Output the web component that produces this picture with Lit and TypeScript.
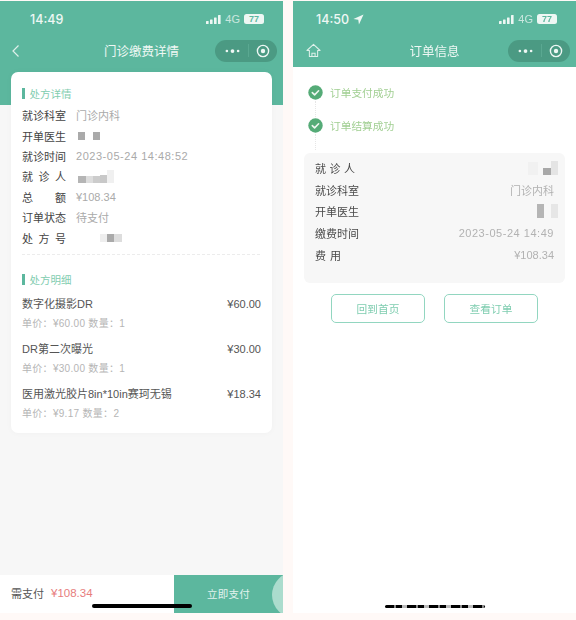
import { LitElement, html, css, svg } from "lit";
import { customElement } from "lit/decorators.js";

const statusRight = html`<div class="sr">
  <svg width="15" height="9" viewBox="0 0 15 9"><rect x="0" y="6" width="2.6" height="3" rx=".5"/><rect x="4" y="4.4" width="2.6" height="4.6" rx=".5"/><rect x="8" y="2.4" width="2.6" height="6.6" rx=".5"/><rect x="12" y="0" width="2.6" height="9" rx=".5"/></svg>
  <span class="net">4G</span>
  <span class="batt">77</span>
</div>`;

const capsule = html`<div class="capsule">
  <svg class="dots" width="15" height="6" viewBox="0 0 16 6"><circle cx="2" cy="3" r="1.4"/><circle cx="8" cy="3" r="2"/><circle cx="14" cy="3" r="1.4"/></svg>
  <i class="sep"></i>
  <svg class="rec" width="14" height="14" viewBox="0 0 14 14"><circle cx="7" cy="7" r="5.6" fill="none" stroke="#eef7f4" stroke-width="1.4"/><circle cx="7" cy="7" r="2.2" fill="#eef7f4"/></svg>
</div>`;

const check = svg`<svg width="15" height="15" viewBox="0 0 15 15"><circle cx="7.5" cy="7.5" r="7.2" fill="#55ab77"/><path d="M4.3 7.6l2.3 2.3 4-4.1" fill="none" stroke="#eef7f0" stroke-width="1.6" stroke-linecap="round" stroke-linejoin="round"/></svg>`;

type Cell = [number, string, number?];
const mosaic = (cells: Cell[], cls = "") => html`<span class="mosaic ${cls}">${cells.map(([w, c, h]) => html`<i style="width:${w}px;height:${h ?? 8}px;background:${c}"></i>`)}</span>`;

@customElement("app-root")
export class AppRoot extends LitElement {
  static styles = css`
    :host { display: block; width: 576px; height: 620px; background: #fff9f7; overflow: hidden; font-family: "Liberation Sans", "Noto Sans CJK SC", sans-serif; }
    .wrap { display: grid; grid-template-columns: 283px 283px; column-gap: 10px; padding-top: 1px; filter: blur(0.45px); }
    .phone { position: relative; height: 612px; display: flex; flex-direction: column; overflow: hidden; }
    .left { background: #f7f7f7; }
    .right { background: #fff; }
    .head { background: #5cb79e; flex: none; color: #eef7f4; }
    .status { height: 30px; padding: 6px 19px 0 30px; box-sizing: border-box; display: flex; align-items: center; justify-content: space-between; }
    .right .status { padding-left: 23px; }
    .time { font-family: Inter, "Liberation Sans", sans-serif; font-size: 12.5px; font-weight: 500; display: flex; align-items: center; gap: 4px; }
    .sr { display: flex; align-items: center; gap: 4px; }
    .sr svg { fill: #eef7f4; }
    .net { font-size: 11px; opacity: .75; }
    .batt { width: 20px; height: 10px; border-radius: 2.5px; background: #eef7f4; color: #5cb79e; font-size: 9px; font-weight: 700; line-height: 10px; text-align: center; }
    .nav { height: 36px; padding: 3px 6px 0 10px; box-sizing: border-box; display: grid; grid-template-columns: 1fr auto; align-items: center; position: relative; }
    .title { position: absolute; left: 0; right: 0; top: 6px; text-align: center; font-size: 12.5px; line-height: 30px; }
    .capsule { grid-column: 2; width: 62px; height: 22px; border-radius: 11px; background: #4b9a83; display: flex; align-items: center; justify-content: space-between; padding: 0 7px 0 10px; box-sizing: border-box; }
    .dots { fill: #eef7f4; }
    .sep { width: 1px; height: 13px; background: #5aa891; }
    .back { margin-left: 1px; }
    .home { margin-left: 3px; }
    .body { flex: 1; padding: 5px 11px 0; background: linear-gradient(#5cb79e 38px, transparent 38px); }
    .card { background: #fff; border-radius: 7px; height: 361px; box-sizing: border-box; padding: 13px 11px 0; box-shadow: 0 0 6px rgba(0,0,0,.03); }
    .sec { display: flex; align-items: center; gap: 5px; font-size: 10.5px; color: #82cdb0; height: 16px; }
    .sec::before { content: ""; width: 2.5px; height: 11px; background: #5cb79e; }
    .kv { display: flex; flex-direction: column; margin-top: 4px; }
    .kvrow { display: flex; align-items: center; height: 20.4px; font-size: 11px; }
    .lab { width: 44px; color: #444; text-align: justify; text-align-last: justify; flex: none; }
    .val { margin-left: 10px; color: #aaa; display: flex; align-items: center; }
    .val.date, .pval.date { letter-spacing: .53px; }
    .val.m1 { margin-left: 12px; }
    .val.m2 { margin-left: 34px; }
    .dash { border-top: 1px dashed #ececec; margin: 6px 1px 0 0; }
    .sec2 { margin-top: 17px; }
    .items { margin-top: 8px; display: flex; flex-direction: column; gap: 10px; }
    .item { height: 35px; display: flex; flex-direction: column; justify-content: space-between; }
    .itop { display: flex; justify-content: space-between; font-size: 11px; color: #555; line-height: 17px; }
    .isub { font-size: 10px; letter-spacing: .3px; color: #b5b5b5; line-height: 15px; }
    .pay { flex: none; height: 38px; display: flex; background: #fff; margin: 0; }
    .pay .sum { width: 174px; display: flex; align-items: center; padding-left: 11px; box-sizing: border-box; font-size: 11px; color: #555; gap: 7px; padding-bottom: 2px; }
    .pay .sum b { font-weight: 400; color: #e77d7d; font-size: 11.5px; }
    .pay .go { flex: 1; background: #5cb79e; color: #e3f3ee; font-size: 10.5px; display: flex; align-items: center; justify-content: center; letter-spacing: .3px; padding-bottom: 2px; }
    .blob { position: absolute; left: 272px; top: 571px; width: 46px; height: 46px; border-radius: 50%; background: #abdccd; }
    .bar { position: absolute; height: 3.5px; width: 100px; border-radius: 2px; background: #000; }
    .left .bar { left: 92px; top: 603px; }
    .right .bar { left: 92px; top: 604px; height: 2.5px; background: repeating-linear-gradient(90deg, #000 0 9px, #888 9px 11px, #000 11px 17px, #bbb 17px 22px); }
    .steps { flex: none; padding: 17px 0 0 15px; display: flex; flex-direction: column; }
    .step { display: flex; align-items: center; gap: 7px; height: 17px; font-size: 10.7px; color: #a1cf92; }
    .step svg { flex: none; }
    .dotline { height: 16px; margin-left: 7px; border-left: 1px dotted #e6e6e6; }
    .panel { flex: none; margin: 3px 11px 0; height: 130px; background: #f7f7f7; border-radius: 6px; box-sizing: border-box; padding: 4px 11px 0; display: flex; flex-direction: column; }
    .prow { height: 21.7px; display: flex; justify-content: space-between; align-items: center; font-size: 11px; color: #555; }
    .plab { color: #4a4a4a; }
    .plab.j { width: 40px; text-align-last: justify; }
    .plab.k { width: 26px; text-align-last: justify; }
    .pval { color: #b2b2b2; display: flex; align-items: center; }
    .btns { flex: none; margin-top: 11px; padding-left: 38px; display: flex; gap: 19px; }
    .btn { width: 94px; height: 29px; box-sizing: border-box; border: 1px solid #92d6c0; border-radius: 5px; color: #7fcdb0; font-size: 10.7px; display: flex; align-items: center; justify-content: center; }
    .mosaic { display: inline-flex; align-items: flex-end; }
    .mosaic.edge { margin-right: -4px; }
    .mosaic i { display: block; }
  `;

  render() {
    const rows: [string, unknown, string][] = [
      ["就诊科室", "门诊内科", ""],
      ["开单医生", mosaic([[7, "#aaa"], [8, "#fff"], [7, "#aaa"]]), "m1"],
      ["就诊时间", "2023-05-24 14:48:52", "date"],
      ["就 诊 人", mosaic([[8, "#b5b5b5", 7], [7, "#ddd", 7], [7, "#ccc", 7], [7, "#c8c8c8", 8], [7, "#f0f0f0", 13]]), "m1"],
      ["总 额", "¥108.34", ""],
      ["订单状态", "待支付", ""],
      ["处 方 号", mosaic([[7, "#eee"], [7, "#aaa"], [8, "#ddd"]]), "m2"],
    ];
    const items = [
      ["数字化摄影DR", "¥60.00", "单价：¥60.00 数量：1"],
      ["DR第二次曝光", "¥30.00", "单价：¥30.00 数量：1"],
      ["医用激光胶片8in*10in赛珂无锡", "¥18.34", "单价：¥9.17 数量：2"],
    ];
    return html`<div class="wrap">
      <section class="phone left">
        <div class="head">
          <div class="status"><span class="time">14:49</span>${statusRight}</div>
          <div class="nav">
            <svg class="back" width="10" height="14" viewBox="0 0 10 14"><path d="M7.5 1.5L2 7l5.5 5.5" fill="none" stroke="#dff0ea" stroke-width="1.2"/></svg>
            <div class="title">门诊缴费详情</div>
            ${capsule}
          </div>
        </div>
        <div class="body">
          <div class="card">
            <div class="sec">处方详情</div>
            <div class="kv">
              ${rows.map(([k, v, m]) => html`<div class="kvrow"><span class="lab">${k}</span><span class="val ${m}">${v}</span></div>`)}
            </div>
            <div class="dash"></div>
            <div class="sec sec2">处方明细</div>
            <div class="items">
              ${items.map(([a, b, c]) => html`<div class="item"><div class="itop"><span>${a}</span><span>${b}</span></div><div class="isub">${c}</div></div>`)}
            </div>
          </div>
        </div>
        <div class="pay">
          <div class="sum">需支付 <b>¥108.34</b></div>
          <div class="go">立即支付</div>
        </div>
        <div class="blob"></div>
        <div class="bar"></div>
      </section>
      <section class="phone right">
        <div class="head">
          <div class="status"><span class="time">14:50 <svg width="11" height="11" viewBox="0 0 10 10"><path d="M9.6.4L.4 4.6l4.4.6.6 4.4z" fill="#eef7f4"/></svg></span>${statusRight}</div>
          <div class="nav">
            <svg class="home" width="15" height="15" viewBox="0 0 16 15"><path d="M8 1L1 7.5h2.6V14h8.8V7.5H15z" fill="none" stroke="#dff0ea" stroke-width="1.1" stroke-linejoin="round"/><path d="M6.3 14v-3.5h3.4V14" fill="none" stroke="#dff0ea" stroke-width="1.1"/></svg>
            <div class="title">订单信息</div>
            ${capsule}
          </div>
        </div>
        <div class="steps">
          <div class="step">${check}订单支付成功</div>
          <div class="dotline"></div>
          <div class="step">${check}订单结算成功</div>
          <div class="dotline"></div>
        </div>
        <div class="panel">
          <div class="prow"><span class="plab j">就 诊 人</span><span class="pval">${mosaic([[10, "#f1f1f1", 13], [5, "#f7f7f7", 7], [8, "#a8a8a8", 7], [7, "#e4e4e4", 14]], "edge")}</span></div>
          <div class="prow"><span class="plab">就诊科室</span><span class="pval">门诊内科</span></div>
          <div class="prow"><span class="plab">开单医生</span><span class="pval">${mosaic([[7, "#b5b5b5", 14], [7, "#f7f7f7", 14], [7, "#e6e6e6", 14]], "edge")}</span></div>
          <div class="prow"><span class="plab">缴费时间</span><span class="pval date">2023-05-24 14:49</span></div>
          <div class="prow"><span class="plab k">费 用</span><span class="pval">¥108.34</span></div>
        </div>
        <div class="btns"><div class="btn">回到首页</div><div class="btn">查看订单</div></div>
        <div class="bar"></div>
      </section>
    </div>`;
  }
}
